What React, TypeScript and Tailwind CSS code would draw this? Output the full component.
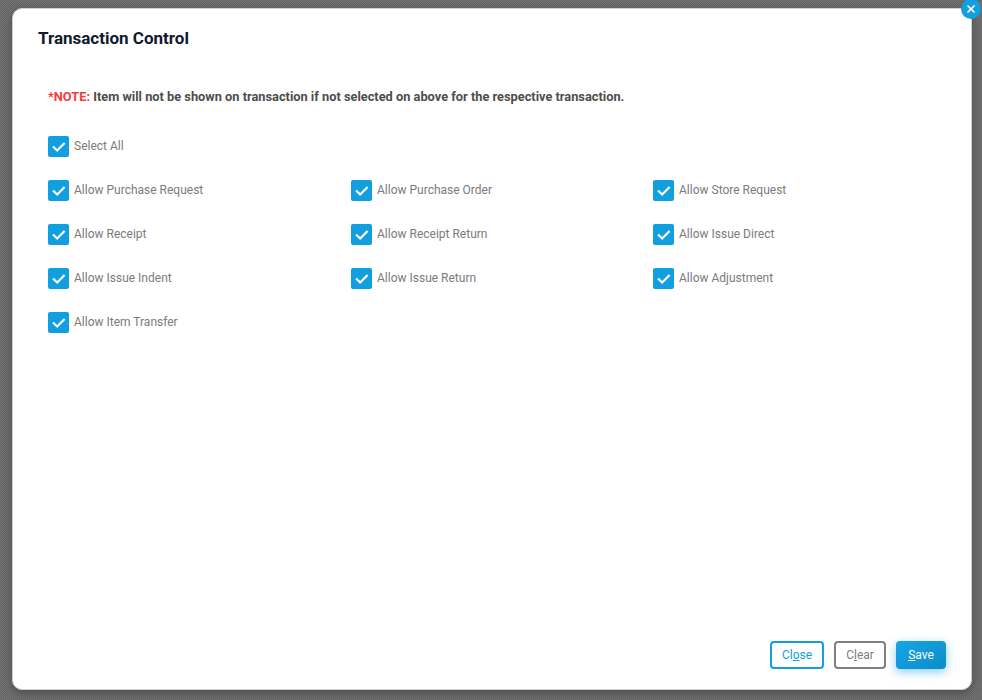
import { X } from "lucide-react";

const items = [
    "Allow Purchase Request",
    "Allow Purchase Order",
    "Allow Store Request",
    "Allow Receipt",
    "Allow Receipt Return",
    "Allow Issue Direct",
    "Allow Issue Indent",
    "Allow Issue Return",
    "Allow Adjustment",
    "Allow Item Transfer",
];

function CheckRow(props: { label: string }) {
    return (
        <label className="flex h-[21px] items-center gap-[5px]">
            <span className="h-[21px] w-[21px] rounded-[2px] bg-[#129fe0]">
                <svg viewBox="0 0 21 21" className="h-[21px] w-[21px]" fill="none" stroke="white" strokeWidth="2.2">
                    <path d="M5 10.5 L9.2 14.5 L16.6 7" />
                </svg>
            </span>
            <span className="pb-[2px] text-[12px] text-[#7b7b7b]">{props.label}</span>
        </label>
    );
}

export default function App() {
    return (
        <div className="h-[700px] w-[982px] overflow-hidden bg-[repeating-conic-gradient(#666666_0_25%,#727272_0_50%)] bg-[length:2px_2px] pl-[12px] pt-[8px] font-['Roboto',sans-serif]">
            <div className="relative flex h-[682px] w-[960px] flex-col rounded-[10px] border border-[#cfcfcf] bg-white shadow-[0_3px_10px_rgba(0,0,0,0.3)]">
                <button className="absolute -right-[10px] -top-[10px] flex h-[20px] w-[20px] items-center justify-center rounded-full bg-[#129fe0]">
                    <X className="h-3 w-3 text-white" strokeWidth={3.5} />
                </button>
                <h1 className="pl-[25px] pt-[19px] text-[17px] font-bold leading-[20px] text-[#0f1a2e]">Transaction Control</h1>
                <p className="pl-[35px] pt-[41px] text-[12.8px] font-bold leading-[16px] text-[#4d4d4d]">
                    <span className="text-[#f53b3b]">*NOTE:</span> Item will not be shown on transaction if not selected on above for the respective transaction.
                </p>
                <div className="flex-1 pl-[35px] pt-[31px]">
                    <CheckRow label="Select All" />
                    <div className="mt-[23px] grid grid-cols-[303px_302px_1fr] gap-y-[23px]">
                        {items.map((item) => (
                            <CheckRow key={item} label={item} />
                        ))}
                    </div>
                </div>
                <div className="flex justify-end gap-[10px] pb-[20px] pr-[25px]">
                    <button className="h-[28px] w-[54px] rounded-[4px] border-2 border-[#129fe0] text-[12px] text-[#129fe0]">
                        Cl<u>o</u>se
                    </button>
                    <button className="h-[28px] w-[52px] rounded-[4px] border-2 border-[#808080] text-[12px] text-[#808080]">
                        C<u>l</u>ear
                    </button>
                    <button className="h-[28px] w-[50px] rounded-[4px] bg-gradient-to-br from-[#17a5e6] to-[#0d8cc9] text-[12px] text-white shadow-[0_3px_10px_rgba(18,159,224,0.5)]">
                        <u>S</u>ave
                    </button>
                </div>
            </div>
        </div>
    );
}
